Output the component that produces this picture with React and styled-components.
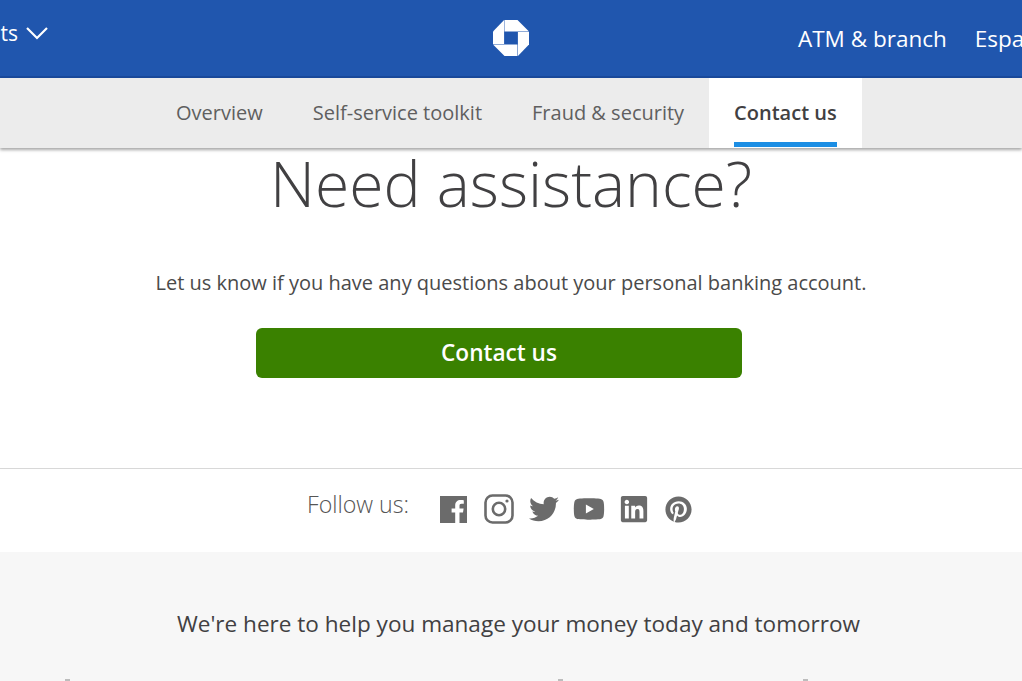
import React from 'react';
import styled, { createGlobalStyle } from 'styled-components';
import { FaTwitter, FaYoutube, FaLinkedin, FaPinterest } from 'react-icons/fa';

const GlobalStyle = createGlobalStyle`
  html, body {
    margin: 0;
    padding: 0;
    background: #fff;
    overflow: hidden;
  }
  body {
    font-family: "Open Sans", "Noto Sans", sans-serif;
  }
`;

const Page = styled.div`
  width: 1022px;
  height: 681px;
  overflow: hidden;
`;

const Header = styled.header`
  height: 76px;
  background: #2056ae;
  border-bottom: 2px solid #1a4a9c;
  display: grid;
  grid-template-columns: 49px 1fr 49px;
  align-items: center;
  position: relative;
`;

const MenuLabel = styled.div`
  display: flex;
  justify-content: flex-end;
  align-items: center;
  gap: 7px;
  color: #fff;
  font-size: 21px;
  white-space: nowrap;
  margin-top: -10px;
`;

const LogoCell = styled.div`
  display: flex;
  justify-content: center;
`;

const TopLinks = styled.div`
  position: absolute;
  left: 798px;
  top: 0;
  height: 76px;
  display: flex;
  align-items: center;
  gap: 28px;
  color: #fff;
  font-size: 22.5px;
  white-space: nowrap;
`;

const SubNav = styled.nav`
  height: 70px;
  background: #ececec;
  box-shadow: 0 2px 3px rgba(0, 0, 0, 0.35);
  display: flex;
  padding-left: 151px;
  position: relative;
`;

const Tab = styled.a`
  box-sizing: border-box;
  height: 70px;
  padding: 0 25px 1px;
  display: flex;
  align-items: center;
  font-size: 20px;
  color: ${(p) => (p.$active ? '#414042' : '#5f5f5f')};
  font-weight: ${(p) => (p.$active ? 600 : 400)};
  background: ${(p) => (p.$active ? '#fff' : 'transparent')};
  position: relative;
  white-space: nowrap;
`;

const TabBar = styled.span`
  position: absolute;
  left: 25px;
  right: 25px;
  bottom: 1px;
  height: 5px;
  background: #1c8ee4;
`;

const Assist = styled.section`
  height: 320px;
  display: flex;
  flex-direction: column;
  align-items: center;
`;

const Title = styled.h1`
  margin: 0;
  font-size: 62.4px;
  line-height: 70px;
  font-weight: 300;
  color: #414042;
`;

const Lead = styled.p`
  margin: 50px 0 0;
  font-size: 20px;
  line-height: 30px;
  color: #4a4a4a;
`;

const PrimaryButton = styled.button`
  margin: 30px 25px 0 0;
  width: 486px;
  height: 50px;
  padding: 0 0 2px 1px;
  border: none;
  border-radius: 6px;
  background: #3a8100;
  color: #fff;
  font-family: inherit;
  font-size: 22.6px;
  font-weight: 600;
`;

const FollowRow = styled.section`
  height: 83px;
  border-top: 1px solid #d8d8d8;
  display: flex;
  align-items: center;
  padding-left: 307px;
`;

const FollowLabel = styled.span`
  font-size: 23.2px;
  font-weight: 300;
  color: #555;
  width: 125px;
  margin-top: -13px;
`;

const Icons = styled.div`
  display: flex;
  margin: -3px 0 0 -1px;
  color: #6b6b6b;
`;

const IconCell = styled.a`
  width: 45px;
  height: 32px;
  display: flex;
  align-items: center;
  justify-content: center;
  color: inherit;
`;

const Promo = styled.section`
  height: 129px;
  background: #f7f7f7;
  text-align: center;
`;

const PromoText = styled.p`
  margin: 0;
  padding: 56px 0 0 15px;
  font-size: 22.55px;
  line-height: 32px;
  color: #414042;
`;

// tips of the next row, only a pixel or two of it is on screen
const PeekRow = styled.div`
  margin-top: 39px;
  height: 2px;
  display: flex;
`;

const Peek = styled.span`
  width: 5px;
  height: 2px;
  background: #bdbdbd;
  margin-left: ${(p) => p.$gap}px;
`;

const ChaseLogo = () => (
  <svg width="38" height="38" viewBox="0 0 38 38" fill="#fff">
    <path d="M12.5 1 H25.5 L37 12.5 H12.5 Z" />
    <path d="M25.9 13 H37 V25.5 L25.9 37 Z" />
    <path d="M25.4 25.5 V37 H12.5 L1 25.5 Z" />
    <path d="M12.1 25 H1 V12.5 L12.1 1 Z" />
  </svg>
);

const Chevron = () => (
  <svg width="24" height="14" viewBox="0 0 24 14" fill="none" stroke="#fff" strokeWidth="2.2">
    <path d="M2 2 L12 12 L22 2" />
  </svg>
);

const FacebookIcon = () => (
  <svg width="27" height="27" viewBox="0 0 27 27" fill="currentColor">
    <path d="M0 0 H27 V27 H19.5 V16.5 H23 L23.6 12.4 H19.5 V9.8 C19.5 8.6 19.9 7.8 21.6 7.8 H23.8 V4.2 C23.4 4.1 22.1 4 20.6 4 C17.4 4 15.2 5.9 15.2 9.4 V12.4 H11.6 V16.5 H15.2 V27 H0 Z" />
  </svg>
);

const InstagramIcon = () => (
  <svg width="30" height="30" viewBox="0 0 30 30" fill="none" stroke="currentColor" strokeWidth="2.6">
    <rect x="1.5" y="1.5" width="27" height="27" rx="7" />
    <circle cx="15" cy="15" r="6.2" />
    <circle cx="23" cy="7" r="1.6" fill="currentColor" stroke="none" />
  </svg>
);

const App = () => (
  <Page>
    <GlobalStyle />
    <Header>
      <MenuLabel>
        ts
        <Chevron />
      </MenuLabel>
      <LogoCell>
        <ChaseLogo />
      </LogoCell>
      <TopLinks>
        <span>ATM &amp; branch</span>
        <span>Español</span>
      </TopLinks>
    </Header>
    <SubNav>
      <Tab>Overview</Tab>
      <Tab>Self-service toolkit</Tab>
      <Tab>Fraud &amp; security</Tab>
      <Tab $active>
        Contact us
        <TabBar />
      </Tab>
    </SubNav>
    <Assist>
      <Title>Need assistance?</Title>
      <Lead>Let us know if you have any questions about your personal banking account.</Lead>
      <PrimaryButton>Contact us</PrimaryButton>
    </Assist>
    <FollowRow>
      <FollowLabel>Follow us:</FollowLabel>
      <Icons>
        <IconCell><FacebookIcon /></IconCell>
        <IconCell><InstagramIcon /></IconCell>
        <IconCell><FaTwitter size={30} /></IconCell>
        <IconCell><FaYoutube size={32} /></IconCell>
        <IconCell><FaLinkedin size={30} /></IconCell>
        <IconCell><FaPinterest size={27} /></IconCell>
      </Icons>
    </FollowRow>
    <Promo>
      <PromoText>We're here to help you manage your money today and tomorrow</PromoText>
      <PeekRow>
        <Peek $gap={65} />
        <Peek $gap={488} />
        <Peek $gap={240} />
      </PeekRow>
    </Promo>
  </Page>
);

export default App;
